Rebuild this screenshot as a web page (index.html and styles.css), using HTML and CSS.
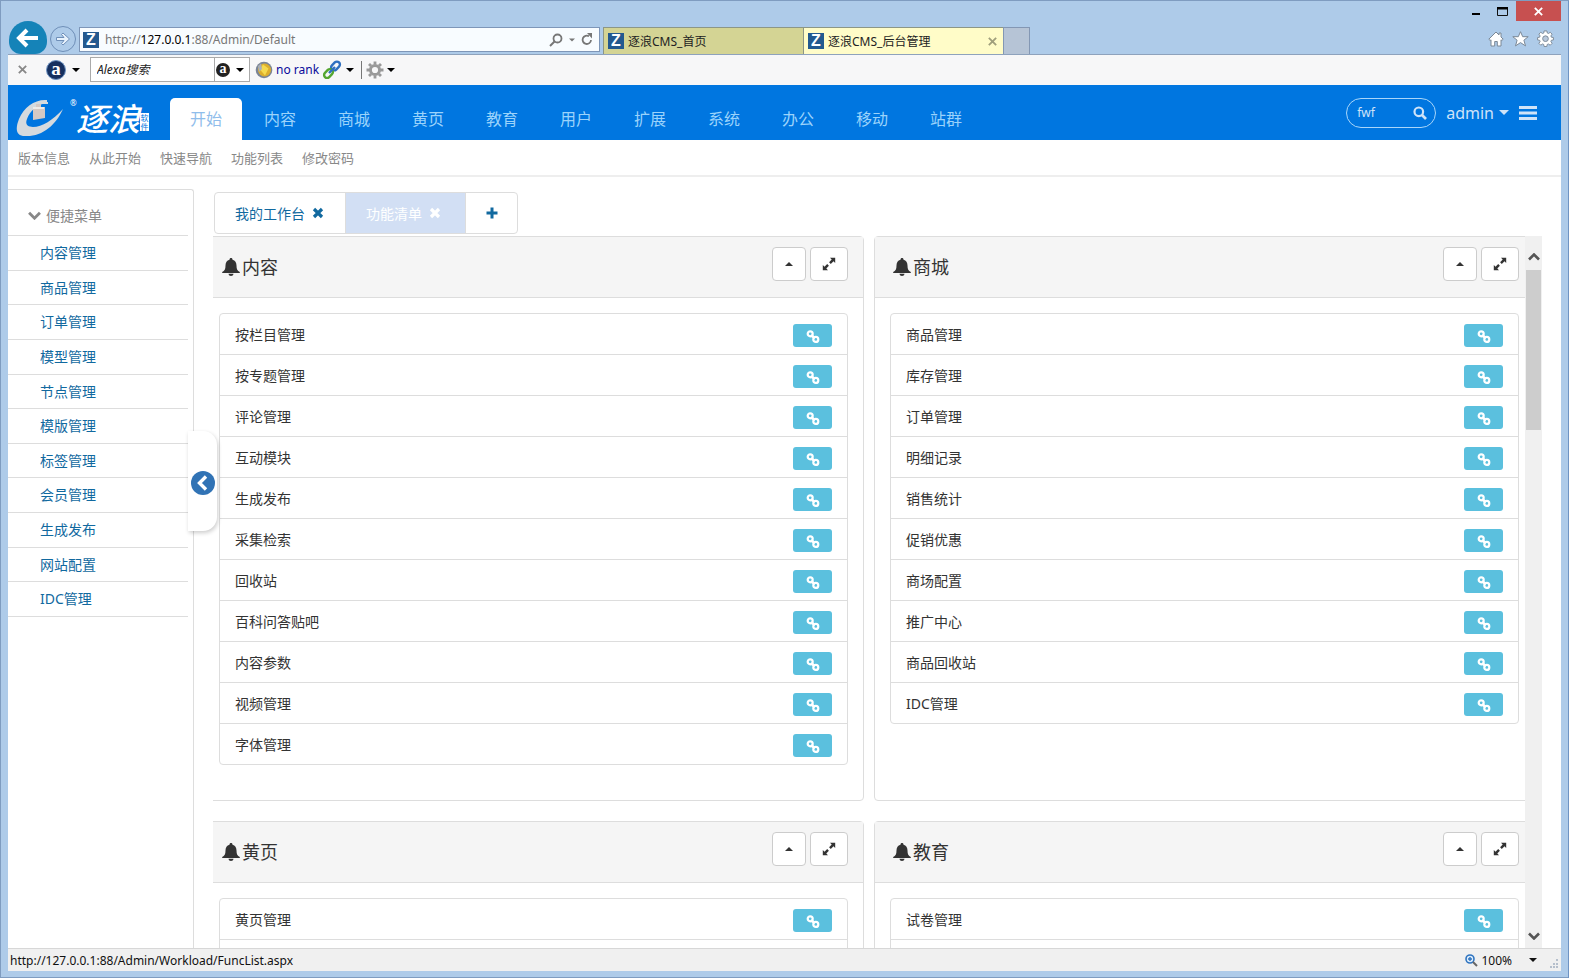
FILE: index.html
```html
<!DOCTYPE html>
<html lang="zh-CN">
<head>
<meta charset="utf-8">
<title>逐浪CMS_后台管理</title>
<link rel="stylesheet" href="styles.css">
</head>
<body>
<svg class="sprite" aria-hidden="true">
  <symbol id="link" viewBox="0 0 16 16"><g fill="none" stroke="currentColor" stroke-width="2.2"><circle cx="5.200" cy="4.800" r="2.500"/><circle cx="10.800" cy="10.400" r="2.500"/><path stroke-width="2.600" d="M6.300 6l3.400 3.400"/></g></symbol>
  <symbol id="bell" viewBox="0 0 18 18"><path fill="currentColor" d="M9 0c1 0 1.500.7 1.500 1.700 2.700.7 4 2.800 4 5.800 0 3.700.9 5.300 3.300 6.500v1H.2v-1c2.400-1.200 3.300-2.800 3.300-6.500 0-3 1.300-5.100 4-5.800C7.500.7 8 0 9 0zM6.500 15.800h5C11.300 17.200 10.300 18 9 18s-2.300-.8-2.500-2.200z"/></symbol>
  <symbol id="up" viewBox="0 0 8 4"><path fill="currentColor" d="M0 4l4-4 4 4z"/></symbol>
  <symbol id="down" viewBox="0 0 8 4"><path fill="currentColor" d="M0 0h8L4 4z"/></symbol>
  <symbol id="expand" viewBox="0 0 14 14"><path fill="currentColor" d="M8 .8h5.200V6l-1.700-1.700-2.700 2.600-1.700-1.700 2.600-2.700zM6 13.200H.8V8l1.700 1.700 2.700-2.600 1.700 1.700-2.600 2.700z"/></symbol>
  <symbol id="cross" viewBox="0 0 12 12"><path d="M2 2l8 8M10 2l-8 8" fill="none" stroke="currentColor" stroke-width="3.200"/></symbol>
  <symbol id="thin-cross" viewBox="0 0 12 12"><path d="M2 2l8 8M10 2l-8 8" fill="none" stroke="currentColor" stroke-width="2"/></symbol>
  <symbol id="search" viewBox="0 0 14 14"><circle cx="5.800" cy="5.800" r="4.300" fill="none" stroke="currentColor" stroke-width="2.200"/><path d="M9 9l4 4" stroke="currentColor" stroke-width="2.600"/></symbol>
  <symbol id="gear" viewBox="0 0 18 18"><g fill="none" stroke="currentColor"><circle cx="9" cy="9" r="4.600" stroke-width="3"/><path stroke-width="2.800" d="M9 .5v3M9 14.500v3M.5 9h3M14.500 9h3M3 3l2.100 2.100M12.900 12.900L15 15M3 15l2.100-2.100M12.900 5.100L15 3"/></g></symbol>
  <symbol id="chevron" viewBox="0 0 12 8"><path d="M1 6.500l5-5 5 5" fill="none" stroke="currentColor" stroke-width="2.600"/></symbol>
</svg>

<header class="chrome">
  <div class="caption">
    <button class="cap-btn" aria-label="最小化"><svg width="8" height="10" viewBox="0 0 8 10"><path d="M0 7h8v2H0z"/></svg></button>
    <button class="cap-btn" aria-label="最大化"><svg width="11" height="9" viewBox="0 0 11 9"><path d="M.5 1.500h10v7H.5z" fill="none" stroke="#111"/><path d="M0 0h11v2.500H0z"/></svg></button>
    <button class="cap-btn cap-close" aria-label="关闭"><svg width="11" height="11"><use href="#thin-cross"/></svg></button>
  </div>
  <div class="navrow">
    <button class="back" aria-label="后退"><svg width="24" height="20" viewBox="0 0 24 20"><path d="M22 10H4M11 2l-8 8 8 8" fill="none" stroke="#fff" stroke-width="4"/></svg></button>
    <button class="forward" aria-label="前进"><svg width="16" height="14" viewBox="0 0 16 14"><path d="M1.500 5.500H9L6.500 2.500 8 1l6.500 6L8 13l-1.500-1.500L9 8.500H1.500z" fill="#e8f2fc" stroke="#6f8fb8"/></svg></button>
    <div class="address">
      <span class="fav">Z</span>
      <span class="url">http://<b>127.0.0.1</b>:88/Admin/Default</span>
      <svg width="14" height="14" viewBox="0 0 14 14"><circle cx="8.500" cy="5.500" r="4" fill="none" stroke="#777" stroke-width="1.800"/><path d="M5.500 8.500L1 13" stroke="#777" stroke-width="2"/></svg>
      <svg width="6" height="4"><use href="#down"/></svg>
      <svg width="12" height="13" viewBox="0 0 12 13"><path d="M8 3.200A4.200 4.200 0 1 0 10 7" fill="none" stroke="#777" stroke-width="1.800"/><path d="M6 0h5v5.500z" fill="#777"/></svg>
    </div>
    <div class="btabs">
      <a class="btab" href="#"><span class="fav">Z</span>逐浪CMS_首页</a>
      <a class="btab current" href="#"><span class="fav">Z</span>逐浪CMS_后台管理<svg width="11" height="11"><use href="#thin-cross"/></svg></a>
      <button class="newtab" aria-label="新建选项卡"></button>
    </div>
    <div class="tools">
      <svg width="16" height="16" viewBox="0 0 16 16"><path d="M8 1L.8 8.200l1.400 1.300.8-.7V15h3.700v-4.500h2.600V15H13V8.800l.8.700 1.400-1.300L13 6V2h-2v2z"/></svg>
      <svg width="17" height="16" viewBox="0 0 17 16"><path d="M8.500.7l2.200 5h5.500l-4.300 3.500 1.600 5.700-5-3.300-5 3.300 1.600-5.700L.8 5.700h5.500z"/></svg>
      <svg width="17" height="17" viewBox="0 0 18 18"><path d="M7.500 1h3l.4 2.200 1.300.5L14 2.400 16 4.400l-1.300 1.900.5 1.300 2.200.4v2.500l-2.200.4-.5 1.300L16 14.100l-2 2-1.900-1.300-1.300.5-.4 2.200H7.500l-.4-2.200-1.300-.5L4 16.100l-2-2 1.300-1.900-.5-1.300L.6 10.500V8l2.200-.4.5-1.300L2 4.400l2-2 1.900 1.300 1.300-.5z"/><circle cx="9" cy="9.200" r="3" fill="#b9c9dc"/></svg>
    </div>
  </div>
</header>

<div class="window">
  <div class="alexa">
    <svg class="ax-close" width="11" height="11"><use href="#thin-cross"/></svg>
    <span class="ax-logo">a</span>
    <svg width="8" height="4"><use href="#down"/></svg>
    <div class="ax-search"><input type="text" placeholder="Alexa搜索" aria-label="Alexa搜索"><span class="ax-mini">a</span><svg width="8" height="4"><use href="#down"/></svg></div>
    <svg width="18" height="18" viewBox="0 0 18 18"><circle cx="9" cy="9" r="8.300" fill="#7b8596"/><circle cx="9.500" cy="9" r="6.500" fill="#dcae2c"/><path d="M8 3.500l5.500 4-3.500 7-5-6z" fill="#f5d94e"/><path d="M3 5l3-2.500L7 8l-3 3z" fill="#a9b0b8"/></svg>
    <a class="norank" href="#">no rank</a>
    <svg width="20" height="20" viewBox="0 0 20 20"><g fill="none" stroke-width="2.400"><rect x="8.500" y="3" width="10" height="6" rx="3" transform="rotate(-45 13.500 6)" stroke="#2e6fc0"/><rect x="1.500" y="10.500" width="10" height="6" rx="3" transform="rotate(-45 6.500 13.500)" stroke="#55a630"/><path d="M7 13l6-6" stroke="#2e6fc0"/></g></svg>
    <svg class="ax-arrow" width="8" height="4"><use href="#down"/></svg>
    <i class="ax-sep"></i>
    <svg class="ax-gear" width="18" height="18"><use href="#gear"/></svg>
    <svg width="8" height="4"><use href="#down"/></svg>
  </div>

  <div class="topbar">
    <a class="logo" href="#" aria-label="逐浪软件">
      <svg width="48" height="40" viewBox="0 0 48 40"><path fill="#d5dade" d="M31 1C19 0 8 8 3 20-1 30 0 37 9 37c17 1 31-11 38-27-10 11-21 18-30 18-6 0-8-3-6-8C14 12 21 5 31 4z"/><path fill="#d5c9c4" d="M17 8h3V5h5v3h4v11l-12 2z"/><path fill="#d5dade" d="M26 3h6v2h-6z"/><path fill="#f0ece8" d="M17 8h11v2H17z"/></svg>
      <small>®</small><span class="logo-name">逐浪</span><span class="logo-tag">软件</span>
    </a>
    <nav class="mainnav">
      <a class="on" href="#">开始</a><a href="#">内容</a><a href="#">商城</a><a href="#">黄页</a><a href="#">教育</a><a href="#">用户</a><a href="#">扩展</a><a href="#">系统</a><a href="#">办公</a><a href="#">移动</a><a href="#">站群</a>
    </nav>
    <div class="user">
      <div class="find"><input type="text" value="fwf" aria-label="搜索"><svg width="14" height="14"><use href="#search"/></svg></div>
      <button class="admin">admin<svg width="10" height="5" viewBox="0 0 8 4"><use href="#down"/></svg></button>
      <button class="menu" aria-label="菜单"><svg width="18" height="16" viewBox="0 0 18 16"><path fill="#cfe3f8" d="M0 1h18v3H0zM0 6.500h18v3H0zM0 12h18v3H0z"/></svg></button>
    </div>
  </div>
  <nav class="subnav"><a href="#">版本信息</a><a href="#">从此开始</a><a href="#">快速导航</a><a href="#">功能列表</a><a href="#">修改密码</a></nav>

  <div class="main">
    <aside class="side">
      <h2><svg width="13" height="9"><use href="#chevron"/></svg>便捷菜单</h2>
      <ul>
        <li><a href="#">内容管理</a></li><li><a href="#">商品管理</a></li><li><a href="#">订单管理</a></li><li><a href="#">模型管理</a></li><li><a href="#">节点管理</a></li><li><a href="#">模版管理</a></li><li><a href="#">标签管理</a></li><li><a href="#">会员管理</a></li><li><a href="#">生成发布</a></li><li><a href="#">网站配置</a></li><li><a href="#">IDC管理</a></li>
      </ul>
      <button class="handle" aria-label="收起菜单"><svg width="24" height="24" viewBox="0 0 24 24"><circle cx="12" cy="12" r="12" fill="#3173b5"/><path d="M15 5.500L8.500 12l6.500 6.500" fill="none" stroke="#fff" stroke-width="3.400"/></svg></button>
    </aside>

    <div class="content">
      <div class="tabs">
        <a href="#">我的工作台<svg width="12" height="12"><use href="#cross"/></svg></a>
        <a class="on" href="#">功能清单<svg width="12" height="12"><use href="#cross"/></svg></a>
        <a class="add" href="#" aria-label="新增"><svg width="12" height="12" viewBox="0 0 12 12"><path d="M6 .5v11M.5 6h11" stroke="currentColor" stroke-width="3"/></svg></a>
      </div>
      <div class="scroller">
        <div class="view">
          <div class="grid">
            <section class="panel">
              <div class="head"><svg width="18" height="18"><use href="#bell"/></svg><h3>内容</h3><button aria-label="收起"><svg width="8" height="4"><use href="#up"/></svg></button><button class="wide" aria-label="展开"><svg width="14" height="14"><use href="#expand"/></svg></button></div>
              <ul class="list">
                <li>按栏目管理<a href="#" aria-label="打开"><svg width="16" height="16"><use href="#link"/></svg></a></li>
                <li>按专题管理<a href="#" aria-label="打开"><svg width="16" height="16"><use href="#link"/></svg></a></li>
                <li>评论管理<a href="#" aria-label="打开"><svg width="16" height="16"><use href="#link"/></svg></a></li>
                <li>互动模块<a href="#" aria-label="打开"><svg width="16" height="16"><use href="#link"/></svg></a></li>
                <li>生成发布<a href="#" aria-label="打开"><svg width="16" height="16"><use href="#link"/></svg></a></li>
                <li>采集检索<a href="#" aria-label="打开"><svg width="16" height="16"><use href="#link"/></svg></a></li>
                <li>回收站<a href="#" aria-label="打开"><svg width="16" height="16"><use href="#link"/></svg></a></li>
                <li>百科问答贴吧<a href="#" aria-label="打开"><svg width="16" height="16"><use href="#link"/></svg></a></li>
                <li>内容参数<a href="#" aria-label="打开"><svg width="16" height="16"><use href="#link"/></svg></a></li>
                <li>视频管理<a href="#" aria-label="打开"><svg width="16" height="16"><use href="#link"/></svg></a></li>
                <li>字体管理<a href="#" aria-label="打开"><svg width="16" height="16"><use href="#link"/></svg></a></li>
              </ul>
            </section>
            <section class="panel">
              <div class="head"><svg width="18" height="18"><use href="#bell"/></svg><h3>商城</h3><button aria-label="收起"><svg width="8" height="4"><use href="#up"/></svg></button><button class="wide" aria-label="展开"><svg width="14" height="14"><use href="#expand"/></svg></button></div>
              <ul class="list">
                <li>商品管理<a href="#" aria-label="打开"><svg width="16" height="16"><use href="#link"/></svg></a></li>
                <li>库存管理<a href="#" aria-label="打开"><svg width="16" height="16"><use href="#link"/></svg></a></li>
                <li>订单管理<a href="#" aria-label="打开"><svg width="16" height="16"><use href="#link"/></svg></a></li>
                <li>明细记录<a href="#" aria-label="打开"><svg width="16" height="16"><use href="#link"/></svg></a></li>
                <li>销售统计<a href="#" aria-label="打开"><svg width="16" height="16"><use href="#link"/></svg></a></li>
                <li>促销优惠<a href="#" aria-label="打开"><svg width="16" height="16"><use href="#link"/></svg></a></li>
                <li>商场配置<a href="#" aria-label="打开"><svg width="16" height="16"><use href="#link"/></svg></a></li>
                <li>推广中心<a href="#" aria-label="打开"><svg width="16" height="16"><use href="#link"/></svg></a></li>
                <li>商品回收站<a href="#" aria-label="打开"><svg width="16" height="16"><use href="#link"/></svg></a></li>
                <li>IDC管理<a href="#" aria-label="打开"><svg width="16" height="16"><use href="#link"/></svg></a></li>
              </ul>
            </section>
            <section class="panel">
              <div class="head"><svg width="18" height="18"><use href="#bell"/></svg><h3>黄页</h3><button aria-label="收起"><svg width="8" height="4"><use href="#up"/></svg></button><button class="wide" aria-label="展开"><svg width="14" height="14"><use href="#expand"/></svg></button></div>
              <ul class="list">
                <li>黄页管理<a href="#" aria-label="打开"><svg width="16" height="16"><use href="#link"/></svg></a></li>
                <li></li>
              </ul>
            </section>
            <section class="panel">
              <div class="head"><svg width="18" height="18"><use href="#bell"/></svg><h3>教育</h3><button aria-label="收起"><svg width="8" height="4"><use href="#up"/></svg></button><button class="wide" aria-label="展开"><svg width="14" height="14"><use href="#expand"/></svg></button></div>
              <ul class="list">
                <li>试卷管理<a href="#" aria-label="打开"><svg width="16" height="16"><use href="#link"/></svg></a></li>
                <li></li>
              </ul>
            </section>
          </div>
        </div>
        <div class="scrollbar" aria-hidden="true">
          <svg width="12" height="8"><use href="#chevron"/></svg>
          <i class="thumb"></i>
          <svg class="flip" width="12" height="8"><use href="#chevron"/></svg>
        </div>
      </div>
    </div>
  </div>

  <footer class="status">
    <span>http://127.0.0.1:88/Admin/Workload/FuncList.aspx</span>
    <span class="zoom"><svg width="13" height="13" viewBox="0 0 13 13"><circle cx="5" cy="5" r="4" fill="#dcecfb" stroke="#2f74c0" stroke-width="1.600"/><path d="M5 3v4M3 5h4" stroke="#2f74c0" stroke-width="1.400"/><path d="M8 8l4 4" stroke="#666" stroke-width="2"/></svg>100%</span>
    <svg width="8" height="4"><use href="#down"/></svg>
    <svg class="grip" width="10" height="10" viewBox="0 0 10 10"><path fill="#b5bfcc" d="M7 0h2v2H7zM4 4h2v2H4zM7 4h2v2H7zM1 7h2v2H1zM4 7h2v2H4zM7 7h2v2H7z"/></svg>
  </footer>
</div>
</body>
</html>
```
FILE: styles.css
```css
* { box-sizing: border-box; }
body {
  margin: 0;
  height: 100vh;
  padding: 0 8px 7px;
  display: flex;
  flex-direction: column;
  overflow: hidden;
  background: #aecbe9;
  border-top: 1px solid #7f9cc0;
  box-shadow: inset 1px 0 #7f9cc0, inset -1px 0 #6f94c4, inset 0 -1px #7f9cc0;
  font-family: "Noto Sans", "Noto Sans CJK SC", sans-serif;
  font-size: 14px;
  color: #333;
}
a { color: inherit; text-decoration: none; }
button { margin: 0; padding: 0; border: 0; background: none; font: inherit; color: inherit; }
input { border: 0; padding: 0; background: none; font: inherit; outline: 0; min-width: 0; }
ul { list-style: none; margin: 0; padding: 0; }
h2, h3 { margin: 0; font-weight: 400; }
svg { flex: none; display: block; }
.sprite { position: absolute; width: 0; height: 0; }

/* Browser frame */
.caption { display: flex; justify-content: flex-end; height: 20px; }
.cap-btn { width: 27px; display: flex; align-items: center; justify-content: center; }
.cap-close { width: 45px; background: #c75050; color: #fff; }
.navrow { display: flex; align-items: flex-end; height: 33px; }
.back {
  width: 38px; height: 33px; margin-left: 1px; border-radius: 19px 19px 12px 12px;
  background: #1583b8; display: flex; align-items: center; justify-content: center;
}
.forward {
  width: 26px; height: 26px; margin: 0 3px 2px; border: 1px solid #6f8fb8; border-radius: 50%;
  display: flex; align-items: center; justify-content: center;
}
.address {
  flex: 0 1 521px; height: 25px; margin-bottom: 2px; padding: 0 6px 0 3px;
  display: flex; align-items: center; gap: 6px;
  background: #f8fcff; border: 1px solid #7e96b8; color: #777; font-size: 12px;
}
.url { flex: 1; }
.url b { font-weight: 400; color: #000; }
.fav {
  width: 16px; height: 16px; flex: none; background: #23598f; color: #fff;
  font: 700 16px/16px "Liberation Sans", sans-serif; text-align: center;
}
.btabs { display: flex; height: 27px; margin-left: 3px; font-size: 12px; color: #222; }
.btab {
  width: 200px; padding: 0 5px 0 4px; display: flex; align-items: center; gap: 4px;
  background: #d4d494; border: 1px solid #8c9686; border-width: 1px 0 0 1px;
}
.btab.current { background: #fffcc8; }
.btab svg { margin-left: auto; color: #a09f7c; }
.newtab { width: 27px; background: #b6c4d6; border: 1px solid #8397b4; border-bottom: 0; }
.tools { display: flex; align-items: center; gap: 8px; margin: 0 7px 7px auto; }
.tools svg { fill: #fff; stroke: #7b8896; stroke-width: 1px; }

.window {
  flex: 1; min-height: 0; display: flex; flex-direction: column;
  background: #fff; border-top: 1px solid #8ea2bc;
}
.alexa {
  height: 30px; padding: 0 0 1px 9px; display: flex; align-items: center;
  background: #f7f7f8; color: #000;
}
.ax-close { color: #888; }
.ax-logo, .ax-mini {
  border-radius: 50%; background: #16305f; color: #fff; text-align: center;
  font-family: "Liberation Serif", serif; font-weight: 700;
}
.ax-logo { width: 20px; height: 20px; margin: 0 6px 0 18px; font-size: 19px; line-height: 16px; border: 1px solid #6f94c4; }
.ax-search {
  width: 160px; height: 25px; margin: 0 5px 0 10px; display: flex; align-items: center; gap: 6px;
  background: #fff; border: 1px solid #aaa;
}
.ax-search input { width: 124px; height: 23px; padding-left: 6px; border-right: 1px solid #aaa; font-size: 12px; font-style: italic; }
.ax-search input::placeholder { color: #222; }
.ax-search .ax-mini { margin-left: -5px; }
.ax-mini { width: 14px; height: 14px; font-size: 14px; line-height: 11px; background: #222; flex: none; }
.norank { margin: 0 3px; font-size: 12px; color: #0a0a9a; }
.ax-arrow { margin-left: 4px; }
.ax-sep { width: 1px; height: 18px; margin: 0 4px 0 7px; background: #777; }
.ax-gear { color: #999; margin-right: 3px; }

/* Page header */
.topbar { height: 55px; padding-left: 8px; display: flex; align-items: flex-end; background: #0076e0; }
.logo { width: 154px; height: 41px; display: flex; color: #fff; }
.logo small { font-size: 8px; line-height: 8px; width: 6px; margin-left: 6px; }
.logo-name { font-size: 32px; line-height: 36px; font-weight: 500; font-style: italic; font-family: "Noto Sans CJK SC", sans-serif; }
.logo-tag {
  width: 9px; height: 18px; margin: 14px 0 0; flex: none; background: #fff; color: #0076e0;
  font-size: 8px; line-height: 9px; text-align: center;
}
.mainnav { display: grid; grid-template-columns: repeat(11, 72px); gap: 2px; font-size: 16px; color: #9bd3fb; }
.mainnav a { height: 42px; line-height: 43px; text-align: center; border-radius: 5px 5px 0 0; }
.mainnav .on { background: #fff; color: #8fbdeb; }
.user { margin: 0 24px 0 auto; height: 55px; display: flex; align-items: center; gap: 10px; color: #cfe3f8; }
.find {
  width: 90px; height: 30px; padding: 0 8px 0 10px; display: flex; align-items: center; gap: 4px;
  border: 1px solid #a9d6fa; border-radius: 15px; font-size: 12px;
}
.find input { width: 52px; color: #cfe3f8; }
.admin { display: flex; align-items: center; gap: 5px; font-size: 16px; }
.subnav {
  height: 37px; padding-left: 10px; display: flex; gap: 19px;
  border-bottom: 2px solid #eee; font-size: 13px; line-height: 36px; color: #888;
}

/* Work area */
.main { flex: 1; min-height: 0; display: flex; }
.side {
  position: relative; width: 186px; margin-top: 12px; flex: none;
  border: 1px solid #ddd; border-left: 0; border-bottom: 0; border-top-right-radius: 3px;
}
.side h2 { height: 46px; margin-right: 5px; padding: 5px 0 0 20px; display: flex; align-items: center; gap: 5px; font-size: 14px; color: #888; border-bottom: 1px solid #ddd; }
.side h2 svg { transform: rotate(180deg); }
.side ul { display: grid; height: 381px; grid-auto-rows: 1fr; margin-right: 5px; color: #11699f; }
.side li { padding-left: 32px; line-height: 33px; border-bottom: 1px solid #ddd; }
.handle {
  position: absolute; right: -24px; top: 241px; width: 29px; height: 100px; padding-top: 4px;
  display: flex; align-items: center; justify-content: center;
  background: #fff; border-radius: 0 14px 14px 0; box-shadow: 1px 2px 4px rgba(0, 0, 0, .2);
}
.content { flex: 1; min-width: 0; margin: 15px 19px 0; display: flex; flex-direction: column; }
.tabs { display: flex; width: max-content; margin-left: 1px; height: 42px; border: 1px solid #ddd; border-radius: 4px; color: #11699f; }
.tabs a { display: flex; align-items: center; gap: 7px; padding: 0 21px 0 20px; border-right: 1px solid #ddd; }
.tabs .on { background: #d2dff4; color: #fff; padding-right: 24px; }
.tabs .add { width: 51px; padding: 0; justify-content: center; border-right: 0; }
.scroller { flex: 1; min-height: 0; margin-top: 2px; display: flex; }
.view { flex: 1; min-width: 0; overflow: hidden; }
.grid { display: grid; grid-template-columns: 1fr 1fr; gap: 20px 10px; margin: 0 -10px; }
.panel { border: 1px solid #ddd; border-radius: 4px; padding-bottom: 35px; }
.head {
  height: 61px; padding: 0 15px 0 18px; display: flex; align-items: center;
  background: #f5f5f5; border-bottom: 1px solid #ddd;
}
.head h3 { flex: 1; margin-left: 2px; font-size: 18px; line-height: 24px; }
.head button {
  width: 34px; height: 34px; margin: 0 0 6px 4px; display: flex; align-items: center; justify-content: center;
  background: #fff; border: 1px solid #ccc; border-radius: 4px;
}
.head .wide { width: 38px; }
.list { margin: 15px 15px 0; border: 1px solid #ddd; border-radius: 4px; }
.list li { height: 41px; padding: 0 15px; display: flex; align-items: center; justify-content: space-between; }
.list li + li { border-top: 1px solid #ddd; }
.list li:first-child { height: 40px; }
.list a {
  width: 39px; height: 23px; display: flex; align-items: flex-end; justify-content: center; margin-top: 2px; padding-bottom: 2px;
  background: #5bc0de; color: #fff; border-radius: 3px;
}
.scrollbar {
  width: 17px; padding: 17px 0 8px; display: flex; flex-direction: column; align-items: center;
  background: #f0f0f0; color: #555;
}
.thumb { width: 15px; height: 160px; margin: 9px 0 auto; background: #cdcdcd; }
.flip { transform: rotate(180deg); }

.status {
  height: 23px; padding: 0 2px; display: flex; align-items: center;
  background: #f0f0f0; border-top: 1px solid #d7d7d7; font-size: 12px; color: #111;
}
.zoom { margin: 0 17px 0 auto; display: flex; align-items: center; gap: 3px; }
.grip { align-self: flex-end; margin: 0 0 2px 12px; }
```
